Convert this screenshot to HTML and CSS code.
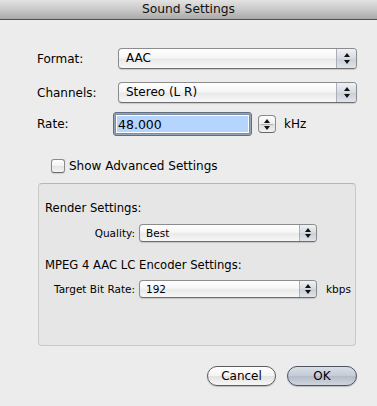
FILE: index.html
```html
<!DOCTYPE html>
<html>
<head>
<meta charset="utf-8">
<link rel="stylesheet" href="styles.css">
</head>
<body>
<div class="window">
  <div class="titlebar">Sound Settings</div>
  <div class="content">
    <div class="form">
      <div class="row">
        <span class="label">Format:</span>
        <div class="popup big"><span class="ptext">AAC</span><span class="arrows"><i class="up"></i><i class="down"></i></span></div>
      </div>
      <div class="row">
        <span class="label">Channels:</span>
        <div class="popup big"><span class="ptext">Stereo (L R)</span><span class="arrows"><i class="up"></i><i class="down"></i></span></div>
      </div>
      <div class="row rate">
        <span class="label">Rate:</span>
        <div class="field"><div class="field-inner">48.000</div></div>
        <div class="stepper"><i class="up"></i><i class="down"></i></div>
        <span class="unit">kHz</span>
      </div>
    </div>
    <label class="check"><span class="box"></span><span>Show Advanced Settings</span></label>
    <div class="group">
      <div class="heading">Render Settings:</div>
      <div class="subrow">
        <span class="sublabel">Quality:</span>
        <div class="popup small"><span class="ptext">Best</span><span class="arrows"><i class="up"></i><i class="down"></i></span></div>
      </div>
      <div class="heading second">MPEG 4 AAC LC Encoder Settings:</div>
      <div class="subrow">
        <span class="sublabel">Target Bit Rate:</span>
        <div class="popup small"><span class="ptext">192</span><span class="arrows"><i class="up"></i><i class="down"></i></span></div>
        <span class="subunit">kbps</span>
      </div>
    </div>
    <div class="buttons">
      <div class="btn">Cancel</div>
      <div class="btn default">OK</div>
    </div>
  </div>
</div>
</body>
</html>
```
FILE: styles.css
```css
* { box-sizing: border-box; }
html, body { margin: 0; padding: 0; }
body {
  width: 377px; height: 406px; overflow: hidden;
  background: #ececec;
  font-family: "DejaVu Sans", "Liberation Sans", sans-serif;
  font-size: 12px;
  color: #000;
}
.window { width: 377px; height: 406px; }
.titlebar {
  height: 20px;
  background: linear-gradient(#e3e3e3, #c6c6c6 55%, #a9a9a9);
  border-bottom: 1px solid #505050;
  text-align: center;
  line-height: 19px;
  font-size: 12.3px;
  color: #111;
}
.content { padding: 0 0 0 37px; }
.form { padding-top: 28px; display: flex; flex-direction: column; }
.row { display: flex; align-items: center; }
.row + .row { margin-top: 13px; }
.row.rate { margin-top: 9px; }
.label { width: 81px; flex: none; }
.rate .label { width: 76px; }

.popup {
  position: relative;
  display: flex; align-items: stretch;
  border: 1px solid #8c8c8c;
  border-bottom-color: #6e6e6e;
  border-radius: 4px;
  background: linear-gradient(#ffffff, #f6f6f6 45%, #e9e9e9 55%, #f8f8f8);
  box-shadow: 0 1px 1px rgba(0,0,0,0.15);
  overflow: hidden;
}
.popup.big { width: 239px; height: 21px; }
.popup .ptext { flex: 1; padding-left: 7px; line-height: 19px; }
.popup .arrows {
  width: 20px; flex: none;
  border-left: 1px solid #a9b0ba;
  background: linear-gradient(#eef1f5, #d6dbe2 50%, #c9cfd8 51%, #e0e4ea);
  display: flex; flex-direction: column; align-items: center; justify-content: center; gap: 3px;
}
i.up, i.down { display: block; width: 0; height: 0; border-left: 3px solid transparent; border-right: 3px solid transparent; }
i.up { border-bottom: 4px solid #111; }
i.down { border-top: 4px solid #111; }

.field {
  width: 139px; height: 24px; flex: none;
  border: 1px solid #5f6d7e;
  border-radius: 3px;
  box-shadow: 0 0 0 1px #97a5b6 inset, 0 0 0 2px #7f8c9d inset;
  padding: 3px;
  background: #fff;
}
.field-inner {
  height: 100%;
  background: #b5d5ff;
  font-size: 12.5px;
  line-height: 18px;
  padding-left: 1px;
}
.stepper {
  width: 18px; height: 18px; flex: none; margin-left: 6px;
  border: 1px solid #8a8a8a; border-bottom-color: #666;
  border-radius: 4px;
  background: linear-gradient(#fdfdfd, #eeeeee 50%, #dcdcdc 51%, #f3f3f3);
  display: flex; flex-direction: column; align-items: center; justify-content: center; gap: 3px;
  position: relative;
}
.stepper::after { content: ""; position: absolute; left: 2px; right: 2px; top: 8px; height: 1px; background: #b0b0b0; }
.unit { margin-left: 8px; }

.check { display: flex; align-items: center; margin: 23px 0 0 14px; gap: 4px; }
.check .box {
  width: 14px; height: 14px; flex: none;
  border: 1px solid #8a8a8a; border-bottom-color: #6c6c6c;
  border-radius: 3px;
  background: linear-gradient(#ffffff, #f2f2f2 50%, #e4e4e4 51%, #f4f4f4);
  box-shadow: 0 1px 1px rgba(0,0,0,0.12);
}

.group {
  margin: 10px 0 0 1px;
  width: 318px; height: 163px;
  border: 1px solid #c9c9c9;
  border-top-color: #b6b6b6;
  border-radius: 4px;
  background: #e6e6e6;
  padding: 15px 0 0 6px;
}
.heading { font-size: 11.6px; line-height: 18px; }
.heading.second { margin-top: 14px; }
.subrow { display: flex; align-items: center; margin-top: 7px; font-size: 10.5px; }
.heading.second + .subrow { margin-top: 6px; }
.sublabel { width: 94px; text-align: right; padding-right: 4px; flex: none; }
.popup.small { width: 178px; height: 18px; }
.popup.small .ptext { line-height: 16px; padding-left: 6px; }
.popup.small .arrows { width: 17px; gap: 2px; }
.subunit { margin-left: 9px; }

.buttons { display: flex; justify-content: flex-end; gap: 11px; margin: 20px 20px 0 0; }
.btn {
  width: 69px; height: 20px;
  border: 1px solid #5c5c5c;
  border-radius: 10px;
  background: linear-gradient(#ffffff, #f3f3f3 50%, #e2e2e2 51%, #f7f7f7);
  text-align: center; line-height: 18px;
  box-shadow: 0 1px 1px rgba(0,0,0,0.2);
}
.btn.default {
  width: 70px;
  background: linear-gradient(#d9dee6, #c4cbd5 50%, #b3bcc8 51%, #cfd5de);
  border-color: #4e5560;
}
```
